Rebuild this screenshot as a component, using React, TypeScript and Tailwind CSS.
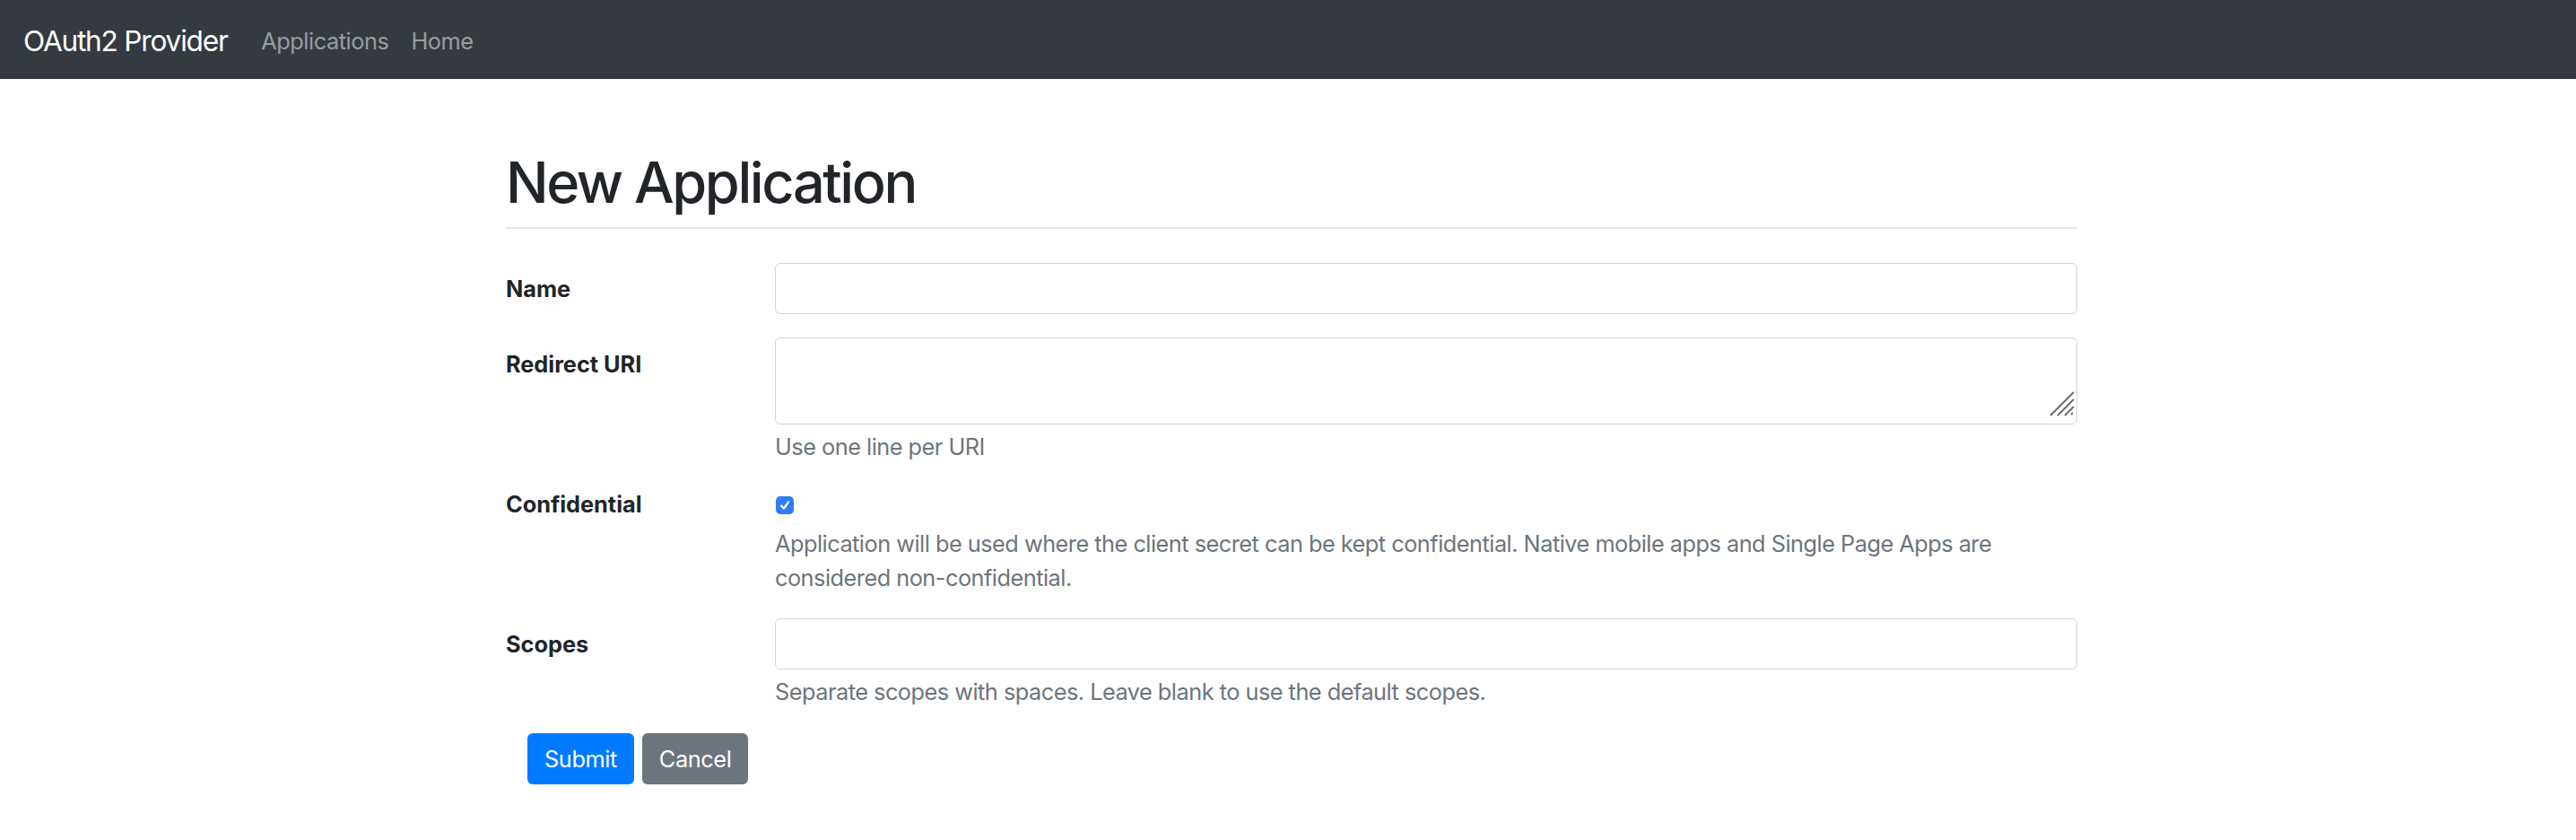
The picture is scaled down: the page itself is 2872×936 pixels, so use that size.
import React from "react";

function Grip() {
  return (
    <svg className="absolute right-[3px] bottom-[9px] pointer-events-none" width="28" height="28" viewBox="0 0 28 28" fill="none">
      <path d="M27 1 L1 27" stroke="#6b6b6b" strokeWidth="2" />
      <path d="M27 9 L9 27" stroke="#6b6b6b" strokeWidth="2" />
      <path d="M27 17 L17 27" stroke="#6b6b6b" strokeWidth="2" />
      <path d="M26 24 L24 26" stroke="#6b6b6b" strokeWidth="2" />
    </svg>
  );
}

export default function App() {
  return (
    <div className="min-h-[936px] w-full bg-white text-[#212529] font-['Inter',sans-serif]">
      <nav className="h-[88px] bg-[#343a40] flex items-center pl-[26px] pt-[3px]">
        <span className="text-[31.6px] leading-[1.5] tracking-[-1.2px] text-white mr-[25px]">OAuth2 Provider</span>
        <a className="text-[25.3px] leading-[1.5] tracking-[-0.45px] text-white/50 px-[12.6px]">Applications</a>
        <a className="text-[25.3px] leading-[1.5] tracking-[-0.45px] text-white/50 px-[12.6px]">Home</a>
      </nav>
      <main className="ml-[564px] w-[1752px] text-[25.3px] leading-[38px]">
        <h1 className="mt-[77px] text-[63px] leading-[76px] font-medium tracking-[-2.4px]">New Application</h1>
        <div className="mt-[12px] h-[2px] bg-[#e6e6e6]" />
        <form className="mt-[38px]">
          <div className="flex mb-[26px]">
            <label className="w-[300px] pt-[10px] font-bold">Name</label>
            <div className="flex-1">
              <input className="w-full h-[57px] rounded-[6px] border-[1.5px] border-[#ced4da] bg-white outline-none" />
            </div>
          </div>
          <div className="flex mb-[26px]">
            <label className="w-[300px] pt-[11px] font-bold">Redirect URI</label>
            <div className="flex-1 flex flex-col">
              <div className="relative">
                <textarea className="block w-full h-[97px] resize-none rounded-[6px] border-[1.5px] border-[#ced4da] bg-white outline-none" />
                <Grip />
              </div>
              <small className="mt-[6px] text-[25.3px] leading-[38px] tracking-[-0.5px] text-[#6c757d]">Use one line per URI</small>
            </div>
          </div>
          <div className="flex mb-[26px]">
            <label className="w-[300px] font-bold">Confidential</label>
            <div className="flex-1 flex flex-col">
              <div className="h-[38px] flex items-center">
                <div className="ml-[1px] mt-[2px] w-[20px] h-[20px] rounded-[5px] bg-[#2f7cf6] flex items-center justify-center">
                  <svg width="14" height="14" viewBox="0 0 14 14" fill="none">
                    <path d="M3 7.5 L6 10.5 L11 3.5" stroke="white" strokeWidth="2.2" strokeLinecap="round" strokeLinejoin="round" />
                  </svg>
                </div>
              </div>
              <small className="mt-[6px] text-[25.3px] leading-[38px] tracking-[-0.5px] text-[#6c757d]">
                Application will be used where the client secret can be kept confidential. Native mobile apps and Single Page Apps are considered non-confidential.
              </small>
            </div>
          </div>
          <div className="flex mb-[27px]">
            <label className="w-[300px] pt-[10px] font-bold">Scopes</label>
            <div className="flex-1 flex flex-col">
              <input className="w-full h-[57px] rounded-[6px] border-[1.5px] border-[#ced4da] bg-white outline-none" />
              <small className="mt-[6px] text-[25.3px] leading-[38px] tracking-[-0.5px] text-[#6c757d]">Separate scopes with spaces. Leave blank to use the default scopes.</small>
            </div>
          </div>
          <div className="flex gap-[9px] ml-[24px]">
            <button type="button" className="h-[57px] px-[19px] rounded-[6px] bg-[#007bff] text-white text-[25.3px] tracking-[-0.4px]">Submit</button>
            <button type="button" className="h-[57px] px-[19px] rounded-[6px] bg-[#6c757d] text-white text-[25.3px] tracking-[-0.4px]">Cancel</button>
          </div>
        </form>
      </main>
    </div>
  );
}
